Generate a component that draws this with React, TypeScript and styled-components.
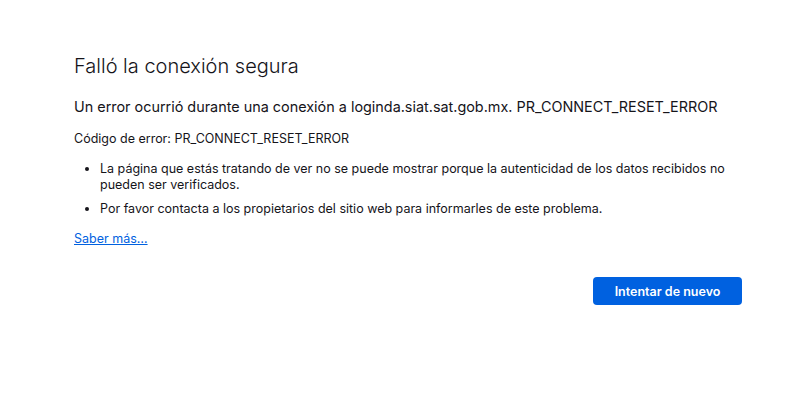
import React from "react";
import styled, { createGlobalStyle } from "styled-components";

const Global = createGlobalStyle`
  html, body { margin: 0; padding: 0; background: #fff; }
  body { font-family: Inter, "Liberation Sans", sans-serif; color: #15141a; }
`;

const Page = styled.div`
  width: 800px;
  height: 405px;
  box-sizing: border-box;
  padding: 52px 0 0 74px;
`;

const Container = styled.div`
  width: 668px;
  display: flex;
  flex-direction: column;
`;

const Title = styled.h1`
  margin: 0;
  font-size: 20px;
  font-weight: 300;
  line-height: 28px;
`;

const Heading = styled.p`
  margin: 17px 0 0;
  font-size: 14.4px;
  line-height: 20px;
  font-weight: 400;
`;

const Body = styled.p`
  margin: 14px 0 0;
  font-size: 12.5px;
  line-height: 16px;
`;

const List = styled.ul`
  margin: 14px 0 0;
  padding-left: 26px;
  font-size: 12.5px;
  line-height: 16px;
  li { margin-bottom: 8px; }
`;

const Link = styled.a`
  font-size: 12.5px;
  line-height: 16px;
  color: #0061e0;
  text-decoration: underline;
  align-self: flex-start;
  margin-top: 6px;
`;

const Actions = styled.div`
  display: flex;
  justify-content: flex-end;
  margin-top: 30px;
`;

const Button = styled.button`
  width: 149px;
  height: 28px;
  border: none;
  border-radius: 4px;
  background: #0061e0;
  color: #fff;
  font-family: inherit;
  font-size: 12.5px;
  font-weight: 600;
`;

export default function App() {
  return (
    <>
      <Global />
      <Page>
        <Container>
          <Title>Falló la conexión segura</Title>
          <Heading>
            Un error ocurrió durante una conexión a loginda.siat.sat.gob.mx. PR_CONNECT_RESET_ERROR
          </Heading>
          <Body>Código de error: PR_CONNECT_RESET_ERROR</Body>
          <List>
            <li>
              La página que estás tratando de ver no se puede mostrar porque la autenticidad de los datos recibidos no pueden ser verificados.
            </li>
            <li>Por favor contacta a los propietarios del sitio web para informarles de este problema.</li>
          </List>
          <Link href="#">Saber más…</Link>
          <Actions>
            <Button>Intentar de nuevo</Button>
          </Actions>
        </Container>
      </Page>
    </>
  );
}
